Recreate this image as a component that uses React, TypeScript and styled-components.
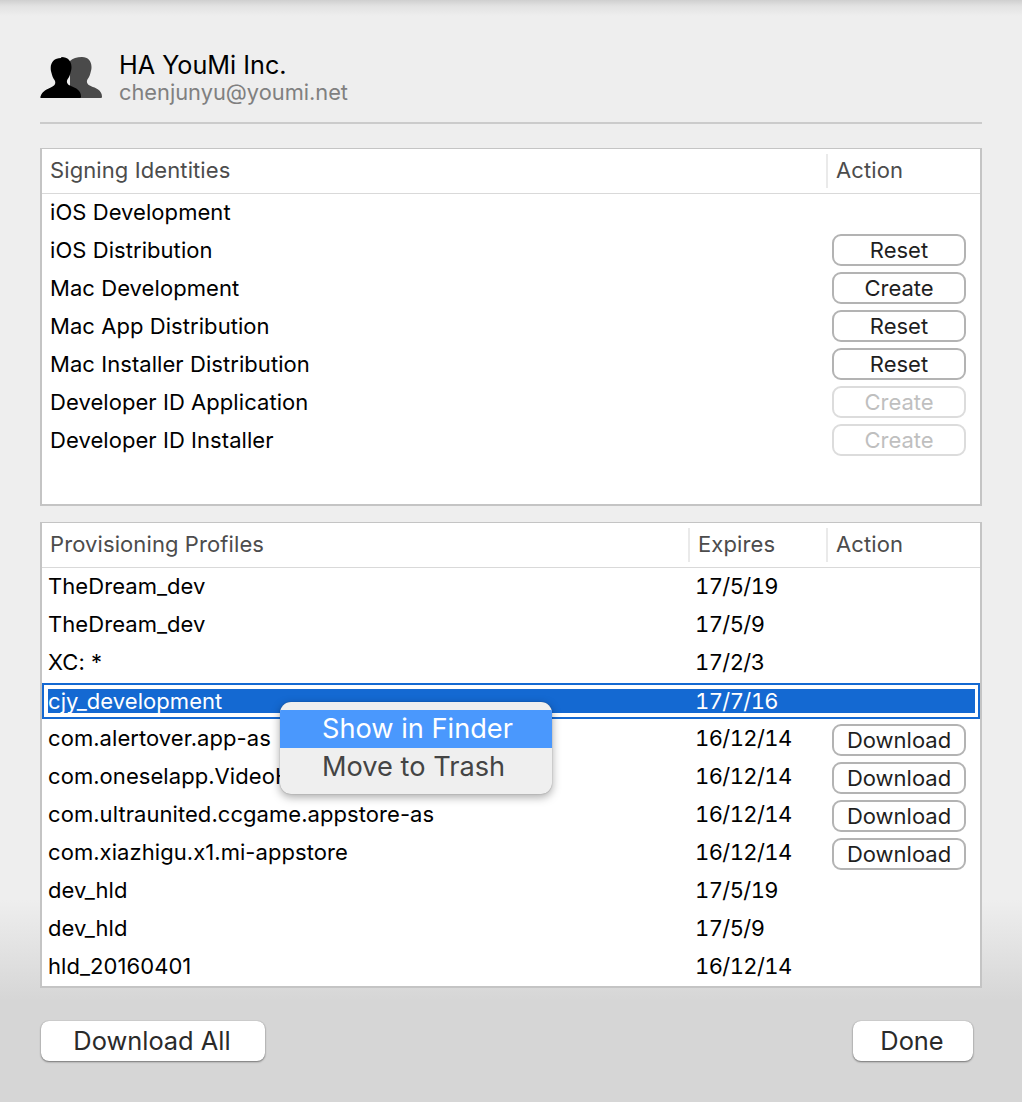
import styled, { createGlobalStyle } from "styled-components";

const GlobalStyle = createGlobalStyle`
  html, body {
    margin: 0;
    padding: 0;
  }
  body {
    font-family: Inter, "Liberation Sans", sans-serif;
    -webkit-font-smoothing: antialiased;
  }
`;

type IdentityRow = { name: string; action?: string; disabled?: boolean };
type ProfileRow = { name: string; expires: string; download?: boolean; selected?: boolean };

const identities: IdentityRow[] = [
  { name: "iOS Development" },
  { name: "iOS Distribution", action: "Reset" },
  { name: "Mac Development", action: "Create" },
  { name: "Mac App Distribution", action: "Reset" },
  { name: "Mac Installer Distribution", action: "Reset" },
  { name: "Developer ID Application", action: "Create", disabled: true },
  { name: "Developer ID Installer", action: "Create", disabled: true },
];

const profiles: ProfileRow[] = [
  { name: "TheDream_dev", expires: "17/5/19" },
  { name: "TheDream_dev", expires: "17/5/9" },
  { name: "XC: *", expires: "17/2/3" },
  { name: "cjy_development", expires: "17/7/16", selected: true },
  { name: "com.alertover.app-as", expires: "16/12/14", download: true },
  { name: "com.oneselapp.VideoH", expires: "16/12/14", download: true },
  { name: "com.ultraunited.ccgame.appstore-as", expires: "16/12/14", download: true },
  { name: "com.xiazhigu.x1.mi-appstore", expires: "16/12/14", download: true },
  { name: "dev_hld", expires: "17/5/19" },
  { name: "dev_hld", expires: "17/5/9" },
  { name: "hld_20160401", expires: "16/12/14" },
];

const AccountsIcon = () => (
  <svg width="62" height="44" viewBox="0 0 62 44">
    <path
      fill="#4a4a4a"
      d="M42 1c6 0 9.500 4 9.500 10 0 2-.3 3.500-.8 5-.5 2.500-1.500 5-3 7-.8 1.200-1 2.500-.5 4 .6 1.600 2 2.400 4 3.200 4 1.600 10.800 3.800 10.800 10.300 0 1-.5 1.500-1.500 1.500H30V5c2.500-2.500 7-4 12-4z"
    />
    <path
      fill="#000"
      d="M21.500 1c6.300 0 10 4 10 10 0 2-.3 3.500-.8 5-.5 2.500-1.500 5-3 7-.8 1.200-1 2.500-.5 4 .6 1.600 2.200 2.400 4.300 3.200 4.200 1.600 9.500 4 9.500 10.300 0 1-.5 1.500-1.500 1.500H1.500C.6 42 0 41.500.5 40.500c1.500-5.500 7-7.400 10.700-9.300 2-1 3.300-1.700 3.800-3.200.5-1.500.3-2.800-.5-4-1.500-2-2.500-4.500-3-7-.5-1.500-.8-3-.8-5 0-6 3.800-10 10.300-10z"
    />
  </svg>
);

const App = () => {
  return (
    <Page>
      <GlobalStyle />
      <Account>
        <AccountsIcon />
        <AccountText>
          <AccountName>HA YouMi Inc.</AccountName>
          <AccountEmail>chenjunyu@youmi.net</AccountEmail>
        </AccountText>
      </Account>
      <Divider />

      <IdentitiesPanel>
        <TableHeader>
          <HeaderCell $width={784}>Signing Identities</HeaderCell>
          <HeaderCell $separated>Action</HeaderCell>
        </TableHeader>
        {identities.map((row) => (
          <Row key={row.name}>
            <IdentityName>{row.name}</IdentityName>
            {row.action && <ActionButton disabled={row.disabled}>{row.action}</ActionButton>}
          </Row>
        ))}
      </IdentitiesPanel>

      <ProfilesPanel>
        <TableHeader>
          <HeaderCell $width={646}>Provisioning Profiles</HeaderCell>
          <HeaderCell $width={138} $separated>
            Expires
          </HeaderCell>
          <HeaderCell $separated>Action</HeaderCell>
        </TableHeader>
        <ProfileList>
          {profiles.map((row, i) =>
            row.selected ? (
              <SelectedRow key={i}>
                <SelectedFill>
                  <SelectedName>{row.name}</SelectedName>
                  <ProfileDate>{row.expires}</ProfileDate>
                </SelectedFill>
              </SelectedRow>
            ) : (
              <Row key={i}>
                <ProfileName>{row.name}</ProfileName>
                <ProfileDate>{row.expires}</ProfileDate>
                {row.download && <DownloadButton>Download</DownloadButton>}
              </Row>
            )
          )}
          <ContextMenu>
            <MenuItem $active>Show in Finder</MenuItem>
            <MenuItem>Move to Trash</MenuItem>
          </ContextMenu>
        </ProfileList>
      </ProfilesPanel>

      <Footer>
        <FooterButton $width={224}>Download All</FooterButton>
        <FooterButton $width={120}>Done</FooterButton>
      </Footer>
    </Page>
  );
};

const Page = styled.div`
  box-sizing: border-box;
  width: 1022px;
  height: 1102px;
  overflow: hidden;
  padding: 56px 40px 0;
  display: flex;
  flex-direction: column;
  background:
    linear-gradient(#cfcfcf 0, #e2e2e2 6px, #eeeeee 16px, transparent 17px),
    linear-gradient(#eeeeee 0, #eeeeee 900px, #d6d6d6 1000px, #d6d6d6 100%);
`;

const Account = styled.div`
  display: flex;
  align-items: flex-start;
  gap: 17px;
  height: 66px;
`;

const AccountText = styled.div`
  display: flex;
  flex-direction: column;
  margin-top: -5px;
`;

const AccountName = styled.div`
  font-size: 25.2px;
  line-height: 29px;
  color: #000;
`;

const AccountEmail = styled.div`
  font-size: 21.8px;
  line-height: 24px;
  color: #808080;
`;

const Divider = styled.div`
  height: 2px;
  background: #cbcbcb;
`;

const Panel = styled.div`
  box-sizing: border-box;
  background: #fff;
  border: 2px solid #c4c4c4;
  border-top-width: 1px;
  overflow: hidden;
`;

const IdentitiesPanel = styled(Panel)`
  height: 358px;
  margin-top: 24px;
`;

const ProfilesPanel = styled(Panel)`
  height: 466px;
  margin-top: 16px;
`;

const TableHeader = styled.div`
  display: flex;
  align-items: center;
  height: 44px;
  border-bottom: 1px solid #d9d9d9;
`;

const HeaderCell = styled.div<{ $width?: number; $separated?: boolean }>`
  box-sizing: border-box;
  width: ${(p) => (p.$width ? `${p.$width}px` : "auto")};
  height: 34px;
  line-height: 32px;
  padding-left: 8px;
  border-left: ${(p) => (p.$separated ? "2px solid #eaeaea" : "none")};
  font-size: 22px;
  letter-spacing: 0.1px;
  color: #4c4c4c;
`;

const Row = styled.div`
  box-sizing: border-box;
  display: flex;
  align-items: center;
  height: 38px;
  padding-bottom: 2px;
  font-size: 22px;
  letter-spacing: 0.06px;
  color: #000;
`;

const IdentityName = styled.div`
  width: 790px;
  padding-left: 8px;
  box-sizing: border-box;
`;

const ProfileList = styled.div`
  position: relative;
`;

const ProfileName = styled.div`
  width: 648px;
  padding-left: 6px;
  box-sizing: border-box;
  white-space: nowrap;
`;

const ProfileDate = styled.div`
  width: 142px;
  box-sizing: border-box;
  padding-left: 5px;
  font-variant-numeric: tabular-nums;
  letter-spacing: -0.6px;
`;

const ActionButton = styled.button`
  box-sizing: border-box;
  width: 134px;
  height: 32px;
  padding: 0;
  background: #fff;
  border: 2px solid ${(p) => (p.disabled ? "#dcdcdc" : "#b3b3b3")};
  border-radius: 9px;
  font-family: inherit;
  font-size: 22px;
  line-height: 26px;
  color: ${(p) => (p.disabled ? "#bfbfbf" : "#1f1f1f")};
`;

const DownloadButton = styled(ActionButton)`
  margin-top: 4px;
`;

const SelectedRow = styled.div`
  box-sizing: border-box;
  height: 36px;
  margin: 1px 0;
  border: 2px solid #1469d2;
  padding: 4px 3px 4px 4px;
  display: flex;
  align-items: stretch;
`;

const SelectedFill = styled.div`
  flex: 1;
  display: flex;
  align-items: center;
  background: #1469d2;
  font-size: 22px;
  letter-spacing: 0.06px;
  color: #fff;
`;

const SelectedName = styled.div`
  width: 642px;
  white-space: nowrap;
`;

const ContextMenu = styled.div`
  position: absolute;
  left: 238px;
  top: 134px;
  width: 272px;
  height: 92px;
  box-sizing: border-box;
  padding-top: 8px;
  background: #efefef;
  border-radius: 11px;
  box-shadow: 0 3px 10px rgba(0, 0, 0, 0.35), 0 0 1px rgba(0, 0, 0, 0.45);
  overflow: hidden;
`;

const MenuItem = styled.div<{ $active?: boolean }>`
  height: 38px;
  line-height: 38px;
  padding-left: 42px;
  font-size: 27.2px;
  background: ${(p) => (p.$active ? "#4a98fd" : "transparent")};
  color: ${(p) => (p.$active ? "#fff" : "#444444")};
`;

const Footer = styled.div`
  display: flex;
  justify-content: space-between;
  margin-top: 33px;
  padding: 0 9px 0 1px;
`;

const FooterButton = styled.button<{ $width: number }>`
  box-sizing: border-box;
  width: ${(p) => p.$width}px;
  height: 40px;
  padding: 0 2px 2px 0;
  background: #fff;
  border: none;
  border-radius: 8px;
  box-shadow: 0 1px 2px rgba(0, 0, 0, 0.45), 0 0 1px rgba(0, 0, 0, 0.3);
  font-family: inherit;
  font-size: 25.4px;
  color: #2a2a2a;
`;

export default App;
